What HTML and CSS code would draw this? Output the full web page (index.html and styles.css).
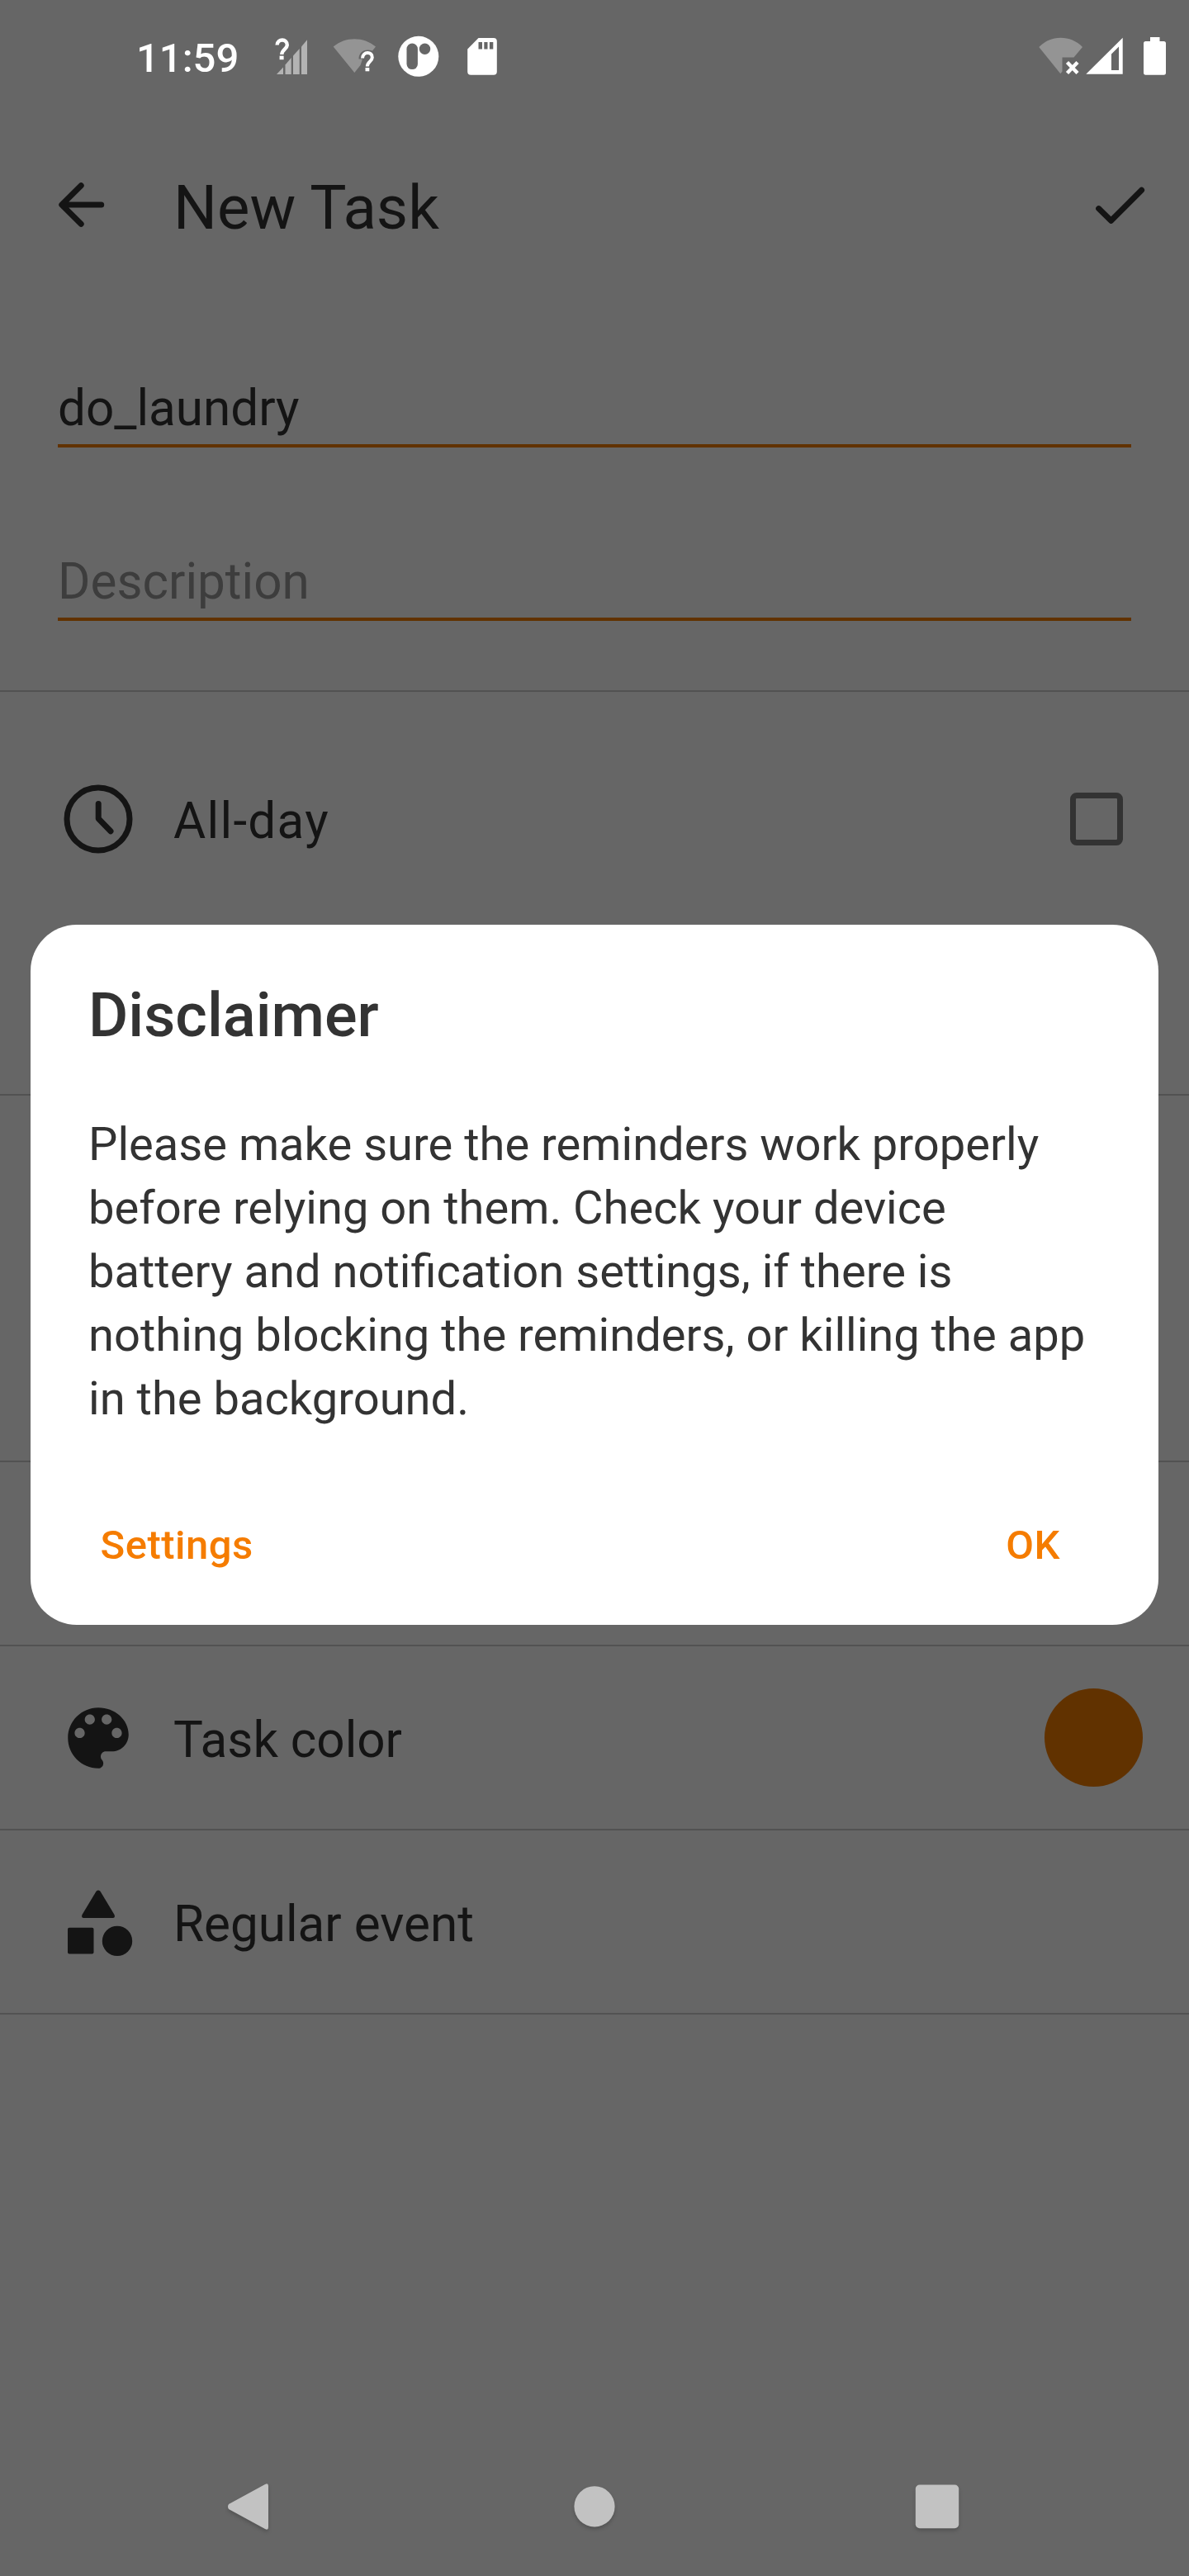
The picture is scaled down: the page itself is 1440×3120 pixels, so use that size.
FILE: index.html
```html
<!DOCTYPE html>
<html lang="en">
<head>
<meta charset="utf-8">
<title>New Task</title>
<link rel="stylesheet" href="styles.css">
</head>
<body>
<div class="status">
  <span class="clock">11:59</span>
  <svg class="s-cell" width="41" height="52" viewBox="332 42 41 52">
    <g fill="#b3b3b3"><path d="M335 90L343 81.500V90z"/><path d="M345.500 90V78.500L352.700 70V90z"/><path d="M355 90V67.500L362.700 59V90z"/><path d="M365 90V56.500L372 48.300V90z"/></g>
    <path d="M335.600 54.500C336 46.500 348 46.500 347.800 54.600C347.600 59.500 341.300 60 341.300 66" fill="none" stroke="#fff" stroke-width="4.400"/><rect x="338.600" y="67.600" width="5" height="4.600" fill="#fff"/>
  </svg>
  <svg class="s-wifi" width="54" height="52" viewBox="403 42 54 52">
    <path fill="#949494" d="M403.700 56.500C418 44 440.500 44 455 56.500L451 61.500C441.500 58.500 434.500 63 434.500 71.500H439L436.500 79L429.300 88z"/>
    <path d="M439 70.500C439.400 62 451 62 450.800 69.600C450.600 74.500 444.800 75 444.800 80.500" fill="none" stroke="#fff" stroke-width="4"/><rect x="442.500" y="82" width="4.800" height="4.300" fill="#fff"/>
  </svg>
  <svg class="s-app" width="50" height="52" viewBox="481.500 42 50 52">
    <circle cx="506.300" cy="68.300" r="24.500" fill="#fff"/><rect x="492" y="52.600" width="13.400" height="31.500" rx="6.700" fill="#666"/><circle cx="514" cy="59.300" r="6.700" fill="#666"/>
  </svg>
  <svg class="s-sd" width="36" height="52" viewBox="565.500 42 36 52">
    <path fill="#fff" d="M579 46H597.300Q601.300 46 601.300 50V86.700Q601.300 90.700 597.300 90.700H569.700Q565.700 90.700 565.700 86.700V59.500z"/>
    <path fill="#666" d="M579 51h4.500v8.500h-4.500zM585.800 51h4.200v8.500h-4.200zM592.400 51h4.400v8.500h-4.400z"/>
  </svg>
  <svg class="s-right" width="156" height="52" viewBox="1257 42 156 52">
    <path fill="#949494" d="M1258.300 57C1272 42 1297 42 1311 57L1300.500 69.500H1286.500V86.500L1284.300 89.300z"/>
    <path d="M1292.500 75.500L1305 88.500M1305 75.500L1292.500 88.500" stroke="#fff" stroke-width="4.400"/>
    <path fill="#fff" fill-rule="evenodd" d="M1315.300 89.700L1359.700 45.700V89.700zM1346 65.500V85H1355V56.500z"/>
    <path fill="#fff" d="M1393 45H1404.500V50H1409.500Q1412 50 1412 52.500V88Q1412 90.700 1409.500 90.700H1387.500Q1385 90.700 1385 88V52.500Q1385 50 1387.500 50H1393z"/>
  </svg>
</div>
<header class="toolbar">
  <svg width="60" height="60" viewBox="69 218 60 60"><path d="M98.200 224.700L74.800 248L98.200 271.300M75.500 248H122.700" class="line"/></svg>
  <h1>New Task</h1>
  <svg width="62" height="60" viewBox="1326 218 62 60"><path d="M1330.600 252.600L1345.600 267.300L1382.600 230.300" class="line"/></svg>
</header>
<main>
  <section class="fields">
    <div class="field">do_laundry</div>
    <div class="field hint">Description</div>
  </section>
  <section class="row day">
    <svg width="98" height="98" viewBox="70 943 98 98"><circle cx="119" cy="992" r="38" class="line"/><path d="M119.200 973.500V991.500L134 1006.700" class="line"/></svg>
    <span>All-day</span>
    <i class="box"></i>
  </section>
  <section class="row dates"></section>
  <section class="row reminders"></section>
  <section class="row"></section>
  <section class="row color">
    <svg width="98" height="98" viewBox="0 0 24 24"><path fill="#141414" d="M12 3c-4.970 0-9 4.030-9 9s4.030 9 9 9c.83 0 1.500-.67 1.500-1.500 0-.39-.15-.74-.39-1.010-.23-.26-.38-.61-.38-.99 0-.83.67-1.500 1.500-1.500H16c2.760 0 5-2.240 5-5 0-4.420-4.030-8-9-8zm-5.500 9c-.83 0-1.500-.67-1.500-1.500S5.670 9 6.500 9 8 9.670 8 10.500 7.330 12 6.500 12zm3-4C8.670 8 8 7.330 8 6.500S8.670 5 9.500 5s1.500.67 1.500 1.500S10.330 8 9.500 8zm5 0c-.83 0-1.500-.67-1.500-1.500S13.670 5 14.500 5s1.500.67 1.500 1.500S15.330 8 14.500 8zm3 4c-.83 0-1.500-.67-1.500-1.500S16.670 9 17.500 9s1.500.67 1.500 1.500-.67 1.500-1.500 1.500z"/></svg>
    <span>Task color</span>
    <i class="dot"></i>
  </section>
  <section class="row type">
    <svg width="98" height="98" viewBox="70 2278.500 98 98"><g fill="#141414"><path d="M116.500 2290.300Q119 2287.500 121.500 2290.300L138.500 2318.500Q140 2322.600 136.500 2322.600H101.500Q98 2322.600 99.500 2318.500z"/><rect x="82" y="2334.300" width="31.500" height="31.800" rx="2"/><circle cx="142" cy="2350.400" r="18.200"/></g></svg>
    <span>Regular event</span>
  </section>
</main>
<nav class="nav">
  <svg width="60" height="72" viewBox="270 3000 60 72"><path d="M277 3033L321 3009Q325 3007 325 3011V3061Q325 3065 321 3063L277 3039Q275 3036 277 3033z"/></svg>
  <svg width="60" height="72" viewBox="690 3000 60 72"><circle cx="720" cy="3035.800" r="24.600"/></svg>
  <svg width="60" height="72" viewBox="1110 3000 60 72"><rect x="1108.800" y="3009.500" width="52.400" height="52.800" rx="5"/></svg>
</nav>
<div class="dialog">
  <h2>Disclaimer</h2>
  <p>Please make sure the reminders work properly<br>before relying on them. Check your device<br>battery and notification settings, if there is<br>nothing blocking the reminders, or killing the app<br>in the background.</p>
  <div class="actions"><span>Settings</span><span>OK</span></div>
</div>
</body>
</html>
```
FILE: styles.css
```css
* { box-sizing: border-box; }
body {
  margin: 0;
  width: 1440px;
  height: 3120px;
  position: relative;
  overflow: hidden;
  display: flex;
  flex-direction: column;
  background: #666;
  color: #141414;
  font-family: Roboto, sans-serif;
}
h1, h2, p { margin: 0; }
svg { display: block; flex: none; }
.line {
  fill: none;
  stroke: #141414;
  stroke-width: 7;
  stroke-linecap: round;
  stroke-linejoin: round;
}

.status {
  height: 140px;
  padding: 42px 27px 0 165px;
  display: flex;
  align-items: flex-start;
  color: #fff;
}
.clock { width: 167px; font-size: 49px; font-weight: 500; line-height: 57px; }
.s-wifi { margin-left: 30px; }
.s-app { margin-left: 24.5px; }
.s-sd { margin-left: 34px; }
.s-right { margin-left: auto; }

.toolbar {
  height: 216px;
  padding: 0 52px 0 69px;
  display: flex;
  align-items: center;
}
.toolbar h1 {
  flex: 1;
  padding: 7px 0 0 81px;
  font-size: 74.3px;
  font-weight: 400;
  line-height: 88px;
}

.fields {
  height: 482px;
  padding: 0 70px;
  border-bottom: 2px solid #525252;
}
.field {
  height: 186px;
  padding-top: 104px;
  border-bottom: 4px solid #613200;
  font-size: 60.2px;
  line-height: 70px;
}
.field.hint { height: 210px; padding-top: 128px; color: #3d3d3d; }

.row {
  height: 223px;
  padding: 0 56px 0 70px;
  display: flex;
  align-items: center;
  border-bottom: 2px solid #525252;
  font-size: 60.2px;
}
.row span { flex: 1; padding: 6px 0 0 42px; line-height: 70px; }
.row.day { height: 308px; border-bottom: 0; padding-right: 80px; }
.row.day span { letter-spacing: 1.3px; }
.row.dates { height: 181px; }
.row.reminders { height: 444px; }
.box { width: 64px; height: 64px; border: 7px solid #333; border-radius: 8px; }
.dot { width: 119px; height: 119px; border-radius: 50%; background: #613200; }

.nav {
  margin-top: auto;
  height: 120px;
  padding: 0 270px;
  display: flex;
  justify-content: space-between;
  fill: #c2c2c2;
}
.nav svg { overflow: visible; filter: drop-shadow(0 3px 2px rgba(0, 0, 0, 0.18)); }

.dialog {
  position: absolute;
  left: 37px;
  top: 1120px;
  width: 1366px;
  height: 848px;
  padding: 66px 70px 0;
  border-radius: 56px;
  background: #fff;
  color: #333;
}
.dialog h2 { font-size: 74px; font-weight: 500; line-height: 88px; }
.dialog p { margin-top: 74px; font-size: 56.1px; line-height: 77px; white-space: nowrap; }
.actions {
  margin-top: 89px;
  height: 100px;
  padding: 0 49px 0 14.5px;
  display: flex;
  align-items: center;
  justify-content: space-between;
  color: #f57c00;
  font-size: 49px;
  font-weight: 500;
  letter-spacing: 0.5px;
  line-height: 60px;
}
```
